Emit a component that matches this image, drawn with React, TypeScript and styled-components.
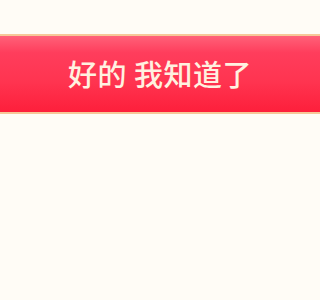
import React from 'react';
import { styled, createGlobalStyle } from 'styled-components';

const GlobalStyle = createGlobalStyle`
    html, body {
        margin: 0;
        padding: 0;
        background: #fffcf6;
    }
    body {
        font-family: "Noto Sans CJK SC", "Noto Sans", sans-serif;
    }
`;

// ---------------- <Page /> --------------------------------------

const Page = styled.div`
    width: 100%;
    min-height: 300px;
    padding-top: 34px;
    box-sizing: border-box;
    background: #fffcf6;
`;

// ---------------- <ConfirmButton /> --------------------------------------

const ConfirmButton = styled.button`
    display: flex;
    align-items: center;
    justify-content: center;
    width: 100%;
    height: 80px;
    padding: 0 0 2px 0;
    margin: 0;
    border: none;
    border-top: 2px solid #f6c898;
    border-bottom: 2px solid #f6c898;
    background: linear-gradient(180deg, #ff6179 0%, #ff3d5c 22%, #ff3450 60%, #fd1f3b 100%);
    color: #fff1e0;
    font-family: "Noto Sans CJK SC", "Noto Sans", sans-serif;
    font-size: 29px;
    font-weight: 500;
    letter-spacing: 0.5px;
    cursor: pointer;
`;

export default function App() {
    return (
        <>
            <GlobalStyle />
            <Page>
                <ConfirmButton>好的 我知道了</ConfirmButton>
            </Page>
        </>
    );
}
